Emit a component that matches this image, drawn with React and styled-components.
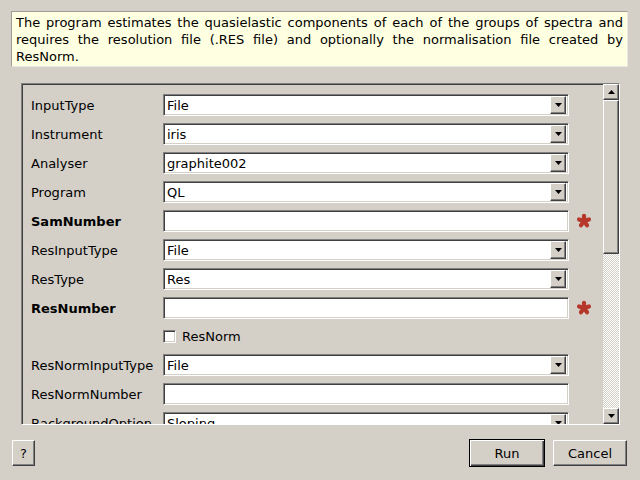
import styled, { createGlobalStyle } from "styled-components";

const GlobalStyle = createGlobalStyle`
  html, body {
    margin: 0;
    padding: 0;
    background: #d4d0c8;
  }
  body {
    font-family: "DejaVu Sans", "Liberation Sans", sans-serif;
    font-size: 13px;
    color: #000;
  }
`;

const raised = `
  background: #d4d0c8;
  border-style: solid;
  border-width: 1px;
  border-color: #ffffff #404040 #404040 #ffffff;
  box-shadow: inset -1px -1px 0 #808080;
  box-sizing: border-box;
`;

const sunken = `
  border-style: solid;
  border-width: 1px;
  border-color: #808080 #ffffff #ffffff #808080;
  box-shadow: inset 1px 1px 0 #404040, inset -1px -1px 0 #d4d0c8;
  box-sizing: border-box;
`;

const Window = styled.div`
  width: 640px;
  height: 480px;
  box-sizing: border-box;
  padding: 11px 12px 13px 11px;
  display: flex;
  flex-direction: column;
`;

const Description = styled.p`
  margin: 0;
  height: 56px;
  box-sizing: border-box;
  padding: 2px 4px 2px 4px;
  background: #ffffe1;
  border: 1px solid;
  border-color: #a09d97 #e9e7e2 #e9e7e2 #a09d97;
  line-height: 17px;
  text-align: justify;
`;

const Frame = styled.div`
  margin: 16px 8px 0 10px;
  height: 342px;
  display: flex;
  ${sunken}
  box-shadow: inset 1px 1px 0 #404040;
`;

const Content = styled.div`
  flex: 1;
  overflow: hidden;
  padding: 10px 0 0 9px;
`;

const Row = styled.div`
  display: flex;
  align-items: center;
  height: ${(p) => (p.$short ? 21 : 22)}px;
  margin-bottom: 7px;
`;

const Label = styled.span`
  width: 132px;
  flex: none;
  white-space: nowrap;
  font-weight: ${(p) => (p.$required ? "bold" : "normal")};
`;

const Field = styled.div`
  ${sunken}
  width: 406px;
  height: 22px;
  flex: none;
  background: #ffffff;
  display: flex;
  align-items: center;
  padding: 2px 2px 2px 3px;
  white-space: nowrap;
`;

const FieldText = styled.span`
  flex: 1;
  overflow: hidden;
`;

const ArrowButton = styled.div`
  ${raised}
  width: 16px;
  height: 18px;
  flex: none;
  display: flex;
  align-items: center;
  justify-content: center;
`;

const Marker = styled.svg`
  margin-left: 7px;
  flex: none;
`;

const CheckRow = styled.label`
  display: flex;
  align-items: center;
  gap: 6px;
  margin-left: 132px;
`;

const CheckBox = styled.span`
  ${sunken}
  width: 13px;
  height: 13px;
  background: #ffffff;
`;

const ScrollBar = styled.div`
  width: 16px;
  flex: none;
  display: flex;
  flex-direction: column;
`;

const ScrollButton = styled.div`
  ${raised}
  height: 16px;
  flex: none;
  display: flex;
  align-items: center;
  justify-content: center;
`;

const Slider = styled.div`
  ${raised}
  height: 154px;
  flex: none;
`;

const Track = styled.div`
  flex: 1;
  background: repeating-conic-gradient(#ffffff 0 25%, #d4d0c8 0 50%) 0 0 / 2px 2px;
`;

const ButtonBar = styled.div`
  margin-top: auto;
  padding: 0 1px;
  display: flex;
  align-items: center;
`;

const Button = styled.button`
  ${raised}
  font: inherit;
  color: #000;
  height: 26px;
  width: ${(p) => p.$width}px;
  padding: 0;
  margin-left: ${(p) => p.$gap || 0}px;
  ${(p) =>
    p.$default &&
    `
    height: 28px;
    border-color: #000;
    box-shadow: inset 1px 1px 0 #ffffff, inset -1px -1px 0 #404040, inset -2px -2px 0 #808080;
  `}
`;

const Spacer = styled.div`
  flex: 1;
`;

const Arrow = ({ up }) => (
  <svg width="7" height="4" viewBox="0 0 7 4">
    <polygon points={up ? "3.5,0 7,4 0,4" : "0,0 7,0 3.5,4"} fill="#000" />
  </svg>
);

const Asterisk = () => (
  <Marker width="16" height="16" viewBox="-8 -8 16 16">
    {[-90, -18, 54, 126, 198].map((a) => {
      const r = (a * Math.PI) / 180;
      return (
        <line
          key={a}
          x1="0"
          y1="0"
          x2={(Math.cos(r) * 5.2).toFixed(2)}
          y2={(Math.sin(r) * 5.2).toFixed(2)}
          stroke="#b5382a"
          strokeWidth="4.2"
          strokeLinecap="round"
        />
      );
    })}
  </Marker>
);

const rows = [
  { label: "InputType", value: "File", combo: true },
  { label: "Instrument", value: "iris", combo: true },
  { label: "Analyser", value: "graphite002", combo: true },
  { label: "Program", value: "QL", combo: true },
  { label: "SamNumber", value: "", required: true },
  { label: "ResInputType", value: "File", combo: true },
  { label: "ResType", value: "Res", combo: true },
  { label: "ResNumber", value: "", required: true },
  { check: "ResNorm" },
  { label: "ResNormInputType", value: "File", combo: true },
  { label: "ResNormNumber", value: "" },
  { label: "BackgroundOption", value: "Sloping", combo: true },
];

export default function App() {
  return (
    <>
      <GlobalStyle />
      <Window>
        <Description>
          The program estimates the quasielastic components of each of the
          groups of spectra and requires the resolution file (.RES file) and
          optionally the normalisation file created by ResNorm.
        </Description>
        <Frame>
          <Content>
            {rows.map((r, i) =>
              r.check ? (
                <Row key={i} $short>
                  <CheckRow>
                    <CheckBox />
                    {r.check}
                  </CheckRow>
                </Row>
              ) : (
                <Row key={i}>
                  <Label $required={r.required}>{r.label}</Label>
                  <Field>
                    <FieldText>{r.value}</FieldText>
                    {r.combo && (
                      <ArrowButton>
                        <Arrow />
                      </ArrowButton>
                    )}
                  </Field>
                  {r.required && <Asterisk />}
                </Row>
              )
            )}
          </Content>
          <ScrollBar>
            <ScrollButton>
              <Arrow up />
            </ScrollButton>
            <Slider />
            <Track />
            <ScrollButton>
              <Arrow />
            </ScrollButton>
          </ScrollBar>
        </Frame>
        <ButtonBar>
          <Button $width={23}>?</Button>
          <Spacer />
          <Button $default $width={76}>
            Run
          </Button>
          <Button $width={74} $gap={8}>
            Cancel
          </Button>
        </ButtonBar>
      </Window>
    </>
  );
}
